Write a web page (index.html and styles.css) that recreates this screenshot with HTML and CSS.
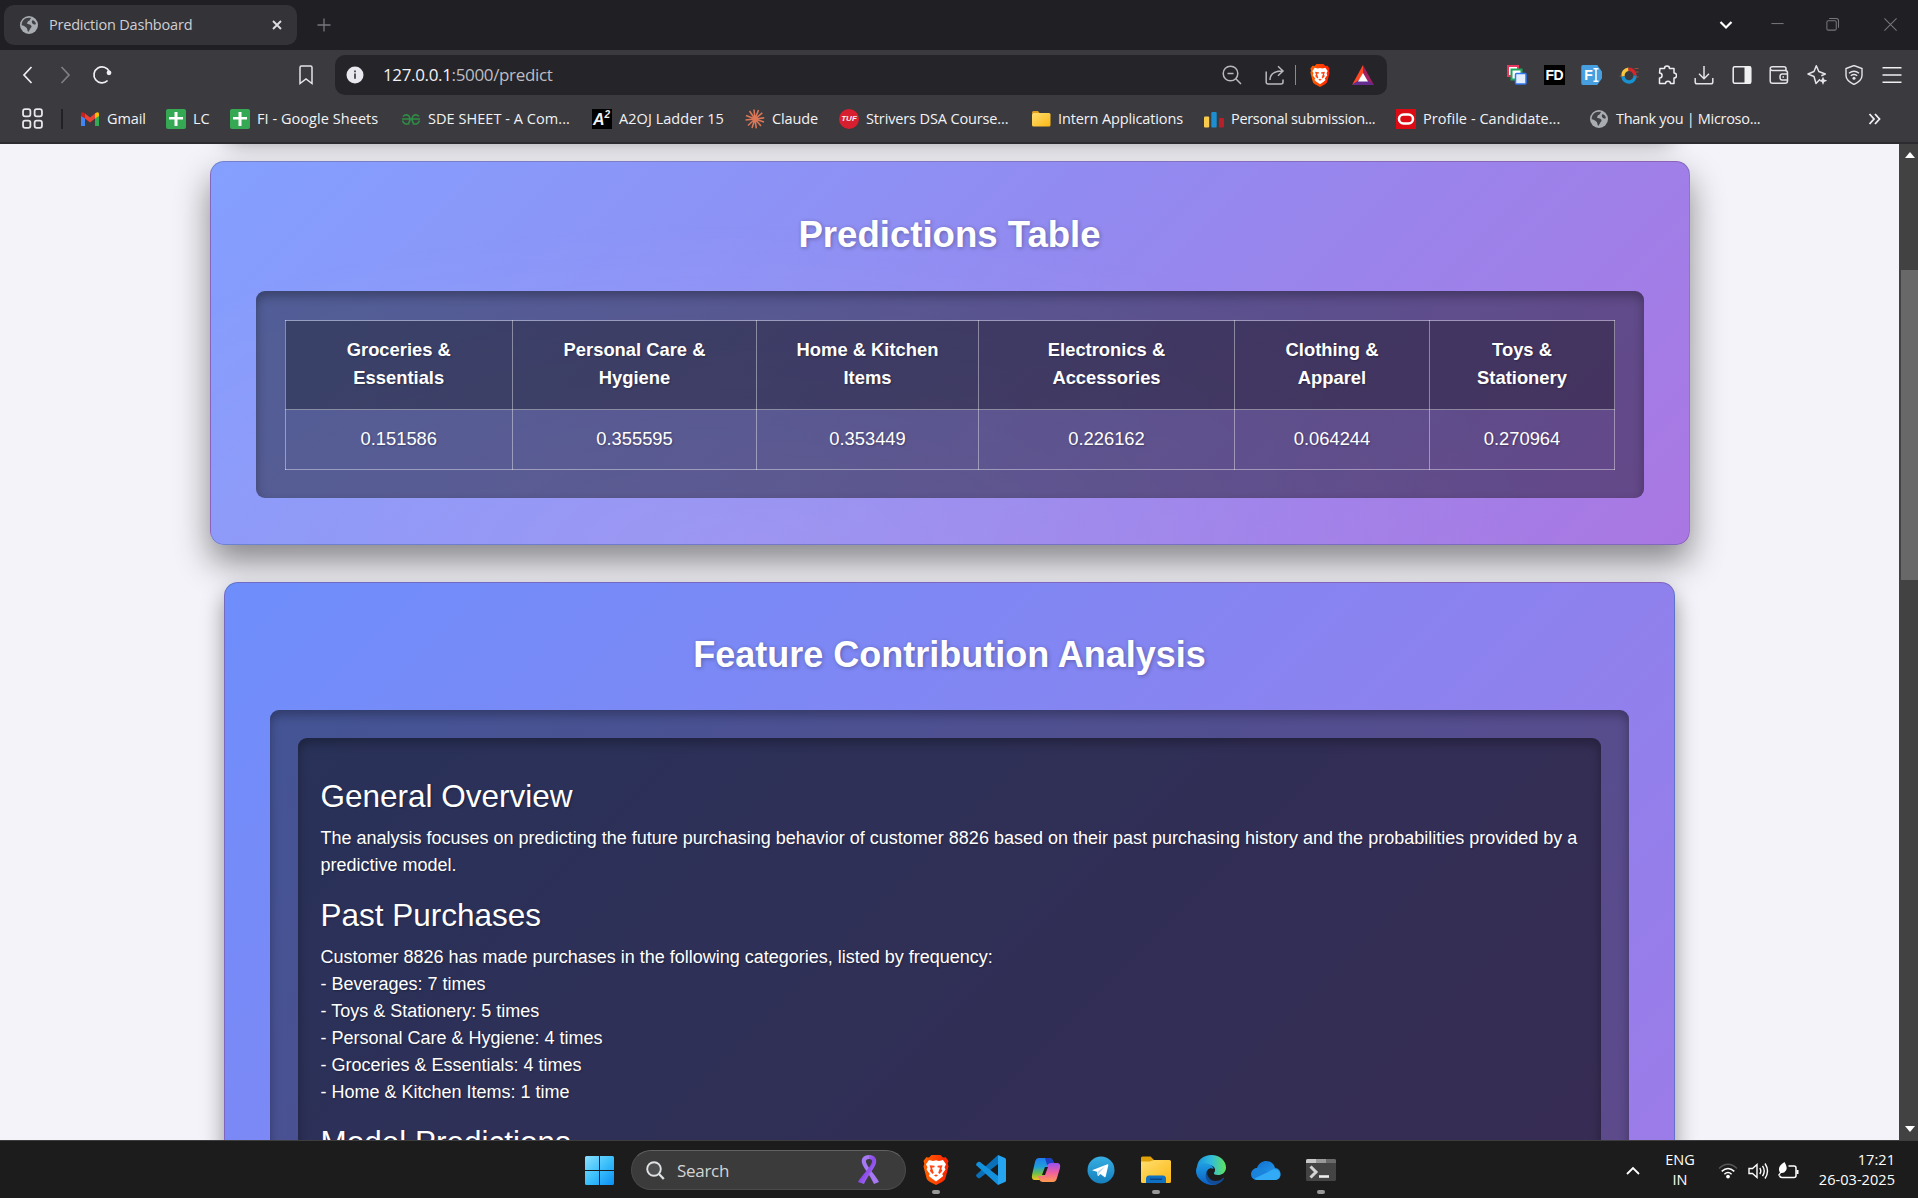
FILE: index.html
```html
<!DOCTYPE html>
<html lang="en">
<head>
<meta charset="utf-8">
<title>Prediction Dashboard</title>
<link rel="stylesheet" href="styles.css">
</head>
<body>
<svg class="defs" aria-hidden="true">
  <defs>
    <linearGradient id="g-brave" x1="0" x2="1"><stop offset="0" stop-color="#ff6500"/><stop offset="1" stop-color="#ff2000"/></linearGradient>
    <linearGradient id="g-win" x1="0" y1="0" x2="1" y2="1"><stop offset="0" stop-color="#8be0fd"/><stop offset=".5" stop-color="#3cc0fb"/><stop offset="1" stop-color="#0a8ff5"/></linearGradient>
    <linearGradient id="g-folder" x1="0" y1="0" x2="1" y2="1"><stop offset="0" stop-color="#ffdf70"/><stop offset="1" stop-color="#fcb714"/></linearGradient>
    <linearGradient id="g-cloud" x1="0" y1="0" x2="1" y2="1"><stop offset="0" stop-color="#0f6ccb"/><stop offset="1" stop-color="#2ba4f2"/></linearGradient>
    <linearGradient id="g-tg" x1="0" y1="0" x2="0" y2="1"><stop offset="0" stop-color="#37aee2"/><stop offset="1" stop-color="#1580bd"/></linearGradient>
    <linearGradient id="g-edge" x1="0" y1="0" x2="1" y2="0"><stop offset="0" stop-color="#1b94dc"/><stop offset=".5" stop-color="#33bddb"/><stop offset="1" stop-color="#60e35a"/></linearGradient>
    <linearGradient id="g-edge2" x1="0" y1="0" x2="0" y2="1"><stop offset="0" stop-color="#1f9de2"/><stop offset="1" stop-color="#0a5fc4"/></linearGradient>
    <linearGradient id="g-cop1" x1="0" y1="0" x2="0" y2="1"><stop offset="0" stop-color="#1f7cf0"/><stop offset=".4" stop-color="#1f9fd8"/><stop offset=".7" stop-color="#6fbf4a"/><stop offset="1" stop-color="#f5c518"/></linearGradient>
    <linearGradient id="g-cop2" x1="0" y1="0" x2="0" y2="1"><stop offset="0" stop-color="#9a50f0"/><stop offset=".5" stop-color="#ee5fa0"/><stop offset="1" stop-color="#ff9a50"/></linearGradient>
    <linearGradient id="g-rib" x1="0" y1="0" x2="1" y2="1"><stop offset="0" stop-color="#b98bf8"/><stop offset=".5" stop-color="#8b4be8"/><stop offset="1" stop-color="#b48af8"/></linearGradient>
    <symbol id="globe" viewBox="0 0 18 18"><circle cx="9" cy="9" r="9" fill="#a9adb2"/><path d="M5.200 2.600C7 1.600 9.600 1.300 11.200 2.100C10 3.100 10.300 4.200 9.200 4.800C7.600 5 7.700 6.400 7 7.400C7.800 8.200 9.800 8 10.600 8.900C12 9.900 11.800 11 10.700 12C9.900 13 9.700 14.500 8.200 15.900C7.200 15 7.700 13.200 6.700 12.100C5.500 10.900 3.600 9.400 1.600 9.300C1.600 6.500 3 4 5.200 2.600zM12.400 4.200C14 4.200 15.400 5.400 15.900 7.700C15.200 9.200 13.500 8.400 12.500 7.400C11.500 6.300 11.600 5 12.400 4.200z" fill="#3f4145"/></symbol>
    <symbol id="sheet" viewBox="0 0 20 20"><rect width="20" height="20" rx="2" fill="#34a853"/><path d="M8.500 3h3v5H17v2.500h-5.500V17h-3v-6.500H3V8h5.500z" fill="#fff"/></symbol>
    <symbol id="brave" viewBox="0 0 26 30"><path d="M13 0h4.500l2.500 2.600 2.800-.3L25.500 6l-.8 2.800.8 2.600-3 11.500c-.5 1.800-1.300 2.500-3.500 4L13 30l-6-3.100c-2.200-1.500-3-2.200-3.500-4L.5 11.400l.8-2.600L.5 6l2.700-3.700 2.800.3L8.500 0z" fill="url(#g-brave)"/><path d="M13 5.200l3 .7 4-.9 3 4.200-1.500 3 1 2.400-3.300 4.300 1 2-2.500 2.100L13 26.500 8.300 23l-2.500-2.100 1-2-3.300-4.300 1-2.400-1.500-3L6 5l4 .9z" fill="#fff"/><path d="M6.500 10.200l5 .6v1.500l-2.500.4 1.800 5-1.300 1.200-2.800-3.200 1-1.800zM19.500 10.200l-5 .6v1.500l2.500.4-1.800 5 1.300 1.200 2.800-3.200-1-1.800zM10.800 20.200l2.200-.8 2.200.8-2.200 1.500z" fill="#ff4715"/></symbol>
  </defs>
</svg>

<header class="tabs">
  <div class="tab">
    <svg class="i18"><use href="#globe"/></svg>
    <span class="tab-title">Prediction Dashboard</span>
    <svg class="x" viewBox="0 0 10 10"><path d="M1 1l8 8M9 1L1 9" stroke="#dedee1" stroke-width="1.900"/></svg>
  </div>
  <svg class="plus" viewBox="0 0 14 14"><path d="M7 .5v13M.5 7h13" stroke="#77777c" stroke-width="1.300"/></svg>
  <div class="winctl">
    <svg viewBox="0 0 16 16"><path d="M2.500 5l5.500 5.500L13.500 5" fill="none" stroke="#fff" stroke-width="2.200"/></svg>
    <svg viewBox="0 0 16 16"><path d="M1.500 7h13" stroke="#77777a" stroke-width="1.100"/></svg>
    <svg viewBox="0 0 16 16"><g fill="none" stroke="#77777a" stroke-width="1.100"><rect x="2" y="4" width="10" height="10" rx="1.500"/><path d="M4.500 1.600H12q2.400 0 2.400 2.400v7.500"/></g></svg>
    <svg viewBox="0 0 16 16"><path d="M1.500 1.500l13 13M14.500 1.500l-13 13" stroke="#77777a" stroke-width="1.100"/></svg>
  </div>
</header>

<nav class="toolbar">
  <svg class="nav-i back" viewBox="0 0 20 20"><path d="M13.500 2L6 10l7.500 8" fill="none" stroke="#f0f0f2" stroke-width="1.700"/></svg>
  <svg class="nav-i fwd" viewBox="0 0 20 20"><path d="M6.500 2L14 10l-7.500 8" fill="none" stroke="#7f7f84" stroke-width="1.700"/></svg>
  <svg class="nav-i reload" viewBox="0 0 20 20"><path d="M15.600 15.500A8 8 0 1 1 17.300 6.600" fill="none" stroke="#f0f0f2" stroke-width="1.700"/><circle cx="17" cy="7.800" r="2.400" fill="#f0f0f2"/></svg>
  <svg class="nav-i mark" viewBox="0 0 20 20"><path d="M4 2.500q0-1.500 1.500-1.500h9q1.500 0 1.500 1.500V18.500l-6-4.500-6 4.500z" fill="none" stroke="#e4e4e7" stroke-width="1.500"/></svg>
  <div class="url">
    <svg class="i18" viewBox="0 0 18 18"><circle cx="9" cy="9" r="8.500" fill="#e9e8ee"/><path d="M9 7.600v5.200M9 4.400v1.900" stroke="#3b3a3f" stroke-width="1.700"/></svg>
    <span class="addr">127.0.0.1<i>:5000/predict</i></span>
    <svg class="u zoom" viewBox="0 0 20 20"><g fill="none" stroke="#b9b9be" stroke-width="1.500"><circle cx="8.500" cy="8.500" r="7.300"/><path d="M13.800 13.800L19 19M5.500 8.500h6"/></g></svg>
    <svg class="u share" viewBox="0 0 20 20"><g fill="none" stroke="#b9b9be" stroke-width="1.500"><path d="M1.200 6.500V17q0 2 2 2H16q2 0 2-2v-2.500"/><path d="M5 15C5 9 8.500 6 17.500 6M13 1.300L18 6l-5 4.700"/></g></svg>
    <span class="bar"></span>
    <svg class="u brave-s"><use href="#brave"/></svg>
    <svg class="u bat" viewBox="0 0 22 20"><path d="M11 0L0 20l11-7z" fill="#ff4724"/><path d="M11 0l11 20-11-7z" fill="#9e1f63"/><path d="M0 20h22l-11-8z" fill="#662d91"/><path d="M11 8l5 8.500H6z" fill="#fff"/></svg>
  </div>
  <div class="exts">
    <svg viewBox="0 0 20 20"><rect x="1" y="1" width="10" height="10" fill="#fff" stroke="#e8365d" stroke-width="2"/><rect x="4.500" y="4.500" width="10" height="10" fill="#fff" stroke="#1fa65a" stroke-width="2"/><rect x="8.500" y="8.500" width="10.500" height="10.500" rx="1" fill="#e4effe" stroke="#3277f1" stroke-width="1.500"/></svg>
    <span class="fd">FD</span>
    <span class="fi">F<svg viewBox="0 0 6 14"><path d="M.5.8h5M.5 13.200h5M3 1v12" stroke="#fff" stroke-width="1.500"/></svg></span>
    <svg viewBox="0 0 20 20"><g fill="none" stroke-width="3.400"><path d="M4 11.500A6.200 6.200 0 0 1 9.500 4.200" stroke="#f9c73f"/><path d="M9.500 4.200A6.200 6.200 0 0 1 16 10.500" stroke="#d5262c"/><path d="M16 10.500A6 6 0 0 1 4 11.500" stroke="#1991cf"/></g><path d="M15.500 3.500h4M17 7h2.500M.5 11h2M16.500 12h3" stroke="#965138"/></svg>
    <svg viewBox="0 0 20 20"><path d="M3 3.500h4.500C7.500.3 12.500.3 12.500 3.500H17v4.500c3.400 0 3.400 5 0 5V18.500h-3.500c0-3-5-3-5 0H2.500V13c3.400 0 3.400-5 0-5z" fill="none" stroke="#ededf0" stroke-width="1.500" stroke-linejoin="round"/></svg>
    <svg viewBox="0 0 20 20"><path d="M10 1v12.500M5 8.700l5 5 5-5M1.200 13v4q0 1.800 1.800 1.800h14q1.800 0 1.800-1.800v-4" fill="none" stroke="#e4e4e7" stroke-width="1.500"/></svg>
    <svg viewBox="0 0 20 20"><rect x="1.200" y="1.700" width="17.600" height="16.600" rx="1.500" fill="none" stroke="#f0f0f2" stroke-width="1.500"/><path d="M12.500 1.500h6.300v17h-6.300z" fill="#f0f0f2"/></svg>
    <svg viewBox="0 0 20 20"><path d="M1.200 4.500V16q0 2.300 2.300 2.300H16q2.500 0 2.500-2.300V7.800Q18.500 5.500 16 5.500H3Q1.200 5.200 1.200 3.500T3.500 1.700H15q2 0 2 2v1.500M18.500 9H13q-2 0-2 3t2 3h5.500M13.500 12h1.500" fill="none" stroke="#e4e4e7" stroke-width="1.500"/></svg>
    <svg viewBox="0 0 20 20"><path d="M13 14.300L9 18.500 7 11.500 1 9l6-2.500L9.300.8l2.500 5.700 6.500 2.500-4 1.700" fill="none" stroke="#e4e4e7" stroke-width="1.500" stroke-linejoin="round"/><path d="M16 11.500l1.200 3 3 1.200-3 1.200-1.200 3-1.200-3-3-1.200 3-1.200z" fill="#e4e4e7"/></svg>
    <svg viewBox="0 0 20 20"><g fill="none" stroke="#e4e4e7" stroke-width="1.400"><path d="M10 .5l8 3v7q0 5-8 9-8-4-8-9v-7z"/><path d="M5 8.200q5-4 10 0M6.800 10.700q3.200-2.300 6.400 0"/></g><circle cx="10" cy="13.300" r="1.500" fill="#e4e4e7"/></svg>
    <svg viewBox="0 0 20 20"><path d="M.5 2.800h19M.5 10h19M.5 17.200h19" stroke="#f0f0f2" stroke-width="1.500"/></svg>
  </div>
</nav>

<nav class="bookmarks">
  <svg class="b apps-i" viewBox="0 0 20 20"><g fill="none" stroke="#e8e8eb" stroke-width="1.700"><rect x="1" y="1" width="7" height="7" rx="2"/><rect x="12" y="1" width="7" height="7" rx="2"/><rect x="1" y="12" width="7" height="7" rx="2"/><rect x="12" y="12" width="7" height="7" rx="2"/></g></svg>
  <span class="divider"></span>
  <a><svg class="b" viewBox="0 0 20 20"><path d="M1 5v12h4V8.500z" fill="#4285f4"/><path d="M19 5v12h-4V8.500z" fill="#34a853"/><path d="M5 4.500l5 4 5-4v5l-5 4-5-4z" fill="#ea4335"/><path d="M1 7V4.700Q1.500 2.500 4 3.700l1 .8v5z" fill="#c5221f"/><path d="M19 7V4.700Q18.500 2.500 16 3.700l-1 .8v5z" fill="#fbbc04"/></svg><span>Gmail</span></a>
  <a><svg class="b"><use href="#sheet"/></svg><span>LC</span></a>
  <a class="wide"><svg class="b"><use href="#sheet"/></svg><span>FI - Google Sheets</span></a>
  <a class="wide"><svg class="b" viewBox="0 0 20 20"><path d="M1 10h18M8.500 14.500Q3 16.500 1.500 11.500M2 7.500Q5 4.500 8 7q2 4-.5 7.200M11.500 14.500q5.500 2 7-3M18 7.500Q15 4.500 12 7q-2 4 .5 7.200" fill="none" stroke="#2f8d46" stroke-width="1.600"/></svg><span>SDE SHEET - A Com...</span></a>
  <a class="wide"><span class="a2">A<sup>2</sup></span><span>A2OJ Ladder 15</span></a>
  <a><svg class="b" viewBox="0 0 20 20"><path d="M10 10L9 .5M10 10l3.500-9M10 10l7.300-6.200M10 10l9.300-1.200M10 10l9 3M10 10l6 7M10 10l1.300 9.300M10 10l-3 9M10 10l-7 6.500M10 10l-9.500 1M10 10L1 6.500M10 10L4.500 2" stroke="#d97757" stroke-width="1.600"/></svg><span>Claude</span></a>
  <a><span class="tuf">TUF</span><span>Strivers DSA Course...</span></a>
  <a><svg class="b" viewBox="0 0 20 20"><path d="M1 3.500Q1 2 2.500 2H7l2 2.500H1z" fill="#e0a01c"/><rect x="1" y="4" width="18.500" height="13.500" rx="1.500" fill="url(#g-folder)"/></svg><span>Intern Applications</span></a>
  <a class="tight"><svg class="b" viewBox="0 0 20 20"><rect x="0" y="7.500" width="5.200" height="11" rx="1" fill="#f8cb4c"/><rect x="7.300" y="3" width="5.400" height="15.500" rx="1" fill="#1d8fd0"/><rect x="15" y="9" width="5" height="9.500" rx="1" fill="#b5202a"/></svg><span>Personal submission...</span></a>
  <a class="wide"><svg class="b" viewBox="0 0 20 20"><rect width="20" height="20" fill="#dc0a14"/><rect x="3" y="5.500" width="14" height="9" rx="4.500" fill="none" stroke="#fff" stroke-width="2.500"/></svg><span>Profile - Candidate...</span></a>
  <a class="tight"><svg class="b i18"><use href="#globe"/></svg><span>Thank you | Microso...</span></a>
  <svg class="more" viewBox="0 0 13 12"><path d="M1.500 1l4.500 5-4.500 5M7 1l4.500 5L7 11" fill="none" stroke="#f0f0f2" stroke-width="1.800"/></svg>
</nav>

<div class="viewport">
  <main class="page">
    <section class="card card-top"></section>
    <section class="card card-table">
      <h2>Predictions Table</h2>
      <div class="panel">
        <table>
          <colgroup><col class="c1"><col class="c2"><col class="c3"><col class="c4"><col class="c5"><col class="c6"></colgroup>
          <thead><tr><th>Groceries &amp;<br>Essentials</th><th>Personal Care &amp;<br>Hygiene</th><th>Home &amp; Kitchen<br>Items</th><th>Electronics &amp;<br>Accessories</th><th>Clothing &amp;<br>Apparel</th><th>Toys &amp;<br>Stationery</th></tr></thead>
          <tbody><tr><td>0.151586</td><td>0.355595</td><td>0.353449</td><td>0.226162</td><td>0.064244</td><td>0.270964</td></tr></tbody>
        </table>
      </div>
    </section>
    <section class="card card-analysis">
      <h2>Feature Contribution Analysis</h2>
      <div class="panel">
        <article>
          <h3>General Overview</h3>
          <p>The analysis focuses on predicting the future purchasing behavior of customer 8826 based on their past purchasing history and the probabilities provided by a predictive model.</p>
          <h3>Past Purchases</h3>
          <p>Customer 8826 has made purchases in the following categories, listed by frequency:<br>- Beverages: 7 times<br>- Toys &amp; Stationery: 5 times<br>- Personal Care &amp; Hygiene: 4 times<br>- Groceries &amp; Essentials: 4 times<br>- Home &amp; Kitchen Items: 1 time</p>
          <h3>Model Predictions</h3>
        </article>
      </div>
    </section>
  </main>
  <div class="scroll">
    <svg viewBox="0 0 10 6"><path d="M5 0l5 6H0z" fill="#fff"/></svg>
    <span class="thumb"></span>
    <svg class="down" viewBox="0 0 10 6"><path d="M0 0h10L5 6z" fill="#fff"/></svg>
  </div>
</div>

<footer class="taskbar">
  <svg class="win" viewBox="0 0 29 29"><path d="M0 1.500Q0 0 1.500 0H14v14H0zM15 0h12.500Q29 0 29 1.500V14H15zM0 15h14v14H1.500Q0 29 0 27.500zM15 15h14v12.500q0 1.500-1.500 1.500H15z" fill="url(#g-win)"/></svg>
  <div class="search">
    <svg class="lens" viewBox="0 0 19 19"><circle cx="8" cy="8" r="6.800" fill="#4d4f50" stroke="#dfe3e5" stroke-width="1.900"/><path d="M13 13l4.800 5" stroke="#dfe3e5" stroke-width="2.300"/></svg>
    <span>Search</span>
    <svg class="ribbon" viewBox="0 0 22 30"><path d="M11 0C5 0 3 4 4 8c1.200 5 7 10 12 21l5-2C17.500 20 9.500 12.500 8 7c-.5-2 1-3 3-3z" fill="#a678f2"/><path d="M11 0c6 0 8 4 7 8-1.200 5-8 12-12 21l-6-2C4 20 12.500 12.500 14 7c.5-2-1-3-3-3z" fill="url(#g-rib)"/></svg>
  </div>
  <div class="apps">
    <div class="app on"><svg class="lion"><use href="#brave"/></svg></div>
    <div class="app"><svg viewBox="0 0 30 30"><path d="M22 0v9L4 23q-1 .7-2 0L.5 21.600q-.8-1 0-2z" fill="#0a70b8"/><path d="M22 30v-9L4 7Q3 6.300 2 7L.5 8.400q-.8 1 0 2z" fill="#1391dc"/><path d="M22 0l7 3q1 .5 1 1.500v21q0 1-1 1.500l-7 3z" fill="#27a4f0"/></svg></div>
    <div class="app"><svg viewBox="0 0 30 30"><path d="M8 3h10q3 0 4 3l2 4h-6l-4 12q-1 3-4 3H4q-4 0-3-5L4 7q1-4 4-4z" fill="url(#g-cop1)"/><path d="M14 3h4q3 0 4 3l1.500 4H16z" fill="#1c3fc4"/><path d="M22 27H12q-3 0-4-3l-1-3h5l4-10q1-3 4-3h6q4 0 3 5l-3 10q-1 4-4 4z" fill="url(#g-cop2)"/><path d="M14 12h3l-3 8h-3z" fill="#1c1c1c"/></svg></div>
    <div class="app"><svg viewBox="0 0 30 30"><circle cx="15" cy="15" r="13.500" fill="url(#g-tg)"/><path d="M6 15.200l15.500-6q1-.3.800 1L19.700 21.500q-.4 1-1.300.4l-4-3-2 2q-.7.400-.8-.6l-.6-3.600z" fill="#fff"/><path d="M11.200 16.800l8-5.300-5.800 6.200-1 3z" fill="#b9d8ea"/></svg></div>
    <div class="app on"><svg viewBox="0 0 30 30"><path d="M0 3q0-1.500 1.500-1.500h8L13 5v5H0z" fill="#e0a208"/><path d="M0 6.500h9L13 5h15.500Q30 5 30 6.500v20q0 1.500-1.500 1.500h-27Q0 28 0 26.500z" fill="url(#g-folder)"/><path d="M5 28v-4q0-3.500 3-3.500h14q3 0 3 3.500v4z" fill="#0f6fc0"/><path d="M9 24.200h12" stroke="#0a3f7c" stroke-width="1.300"/></svg></div>
    <div class="app"><svg viewBox="0 0 30 30"><path d="M1 13C1 5 7.500 0 15.500 0 24 0 30 6 30 12.500c0 5-4 7.500-8 7.500-3 0-4.500-1-4-2 3-4-.5-8-5-8C6 10 1 15 1 13z" fill="url(#g-edge)"/><path d="M0 16C0 10 6 7.500 11 8.500c4 .7 6.500 3.500 6.500 5.500-3-2-7 0-7 5 0 6 6 11 11 10.500-2.500 1-11 1-16-3.500-3.500-3-5.500-6-5.500-10z" fill="url(#g-edge2)"/><path d="M12 14.500C9.500 18 12.500 26 19.500 26c3 0 6-1.300 7.500-3 .6-.5 1.300 0 1 .6C25.500 28 21 30 17.500 29.700 9.500 28.500 7.500 18.500 12 14.500z" fill="#124c96"/></svg></div>
    <div class="app"><svg viewBox="0 0 30 30"><path d="M7 25c-9 0-9-11-1-12C9 3.500 22 4 24 13c7 0 8 12 0 12z" fill="url(#g-cloud)"/><path d="M6 13q3-.5 6 1.500l8 4-13 6.500Q0 25 .5 19 1.500 13.500 6 13z" fill="#1a84dd"/><path d="M3.500 23.500L19 16q4-3 8-.5 4 4 0 8-1.500 1.500-3 1.500H7q-2 0-3.500-1.500z" fill="#32aaf5"/></svg></div>
    <div class="app on"><svg viewBox="0 0 30 30"><rect y="4" width="30" height="22" rx="1.500" fill="#444"/><path d="M0 8V5.500Q0 4 1.500 4H10v4z" fill="#c9c9c9"/><path d="M10 4h10v4H10z" fill="#999"/><path d="M20 4h8.500Q30 4 30 5.500V8H20z" fill="#6a6a6a"/><path d="M4.500 11.500l5.500 5.500-5.500 5.500" fill="none" stroke="#d4d4d4" stroke-width="3"/><path d="M13 21.500h10" stroke="#eee" stroke-width="2.600"/></svg></div>
  </div>
  <svg class="caret" viewBox="0 0 14 9"><path d="M1 8l6-6 6 6" fill="none" stroke="#fff" stroke-width="1.800"/></svg>
  <div class="lang">ENG<br>IN</div>
  <svg class="wifi" viewBox="0 0 20 16"><g fill="none" stroke="#fff" stroke-width="1.500"><path d="M1 5.500q9-8.500 18 0" stroke="#565656"/><path d="M3.700 8.400q6.300-5.800 12.600 0M6.400 11.200q3.600-3.300 7.200 0"/></g><circle cx="10" cy="13.600" r="1.900" fill="#fff"/></svg>
  <svg class="vol" viewBox="0 0 21 18"><g fill="none" stroke="#fff" stroke-width="1.400"><path d="M1 6.500h3.500L9 2.500v13l-4.500-4H1zM11.800 6q2 3 0 6M14.500 3.800q3.500 5.200 0 10.400M17 1.500q5 7.500 0 15"/></g></svg>
  <svg class="batt" viewBox="0 0 21 18"><path d="M10.500 4H16q2 0 2 2v7.500q0 2-2 2H4q-2 0-2.500-2" fill="none" stroke="#fff" stroke-width="1.500"/><path d="M18.500 8h2v4h-2z" fill="#fff"/><path d="M6.500 0Q10 5.500 8 8.500 6 11.500 3 11l-2 3-1-1 2-2.500Q-1.500 5 6.500 0z" fill="#fff"/></svg>
  <div class="clock">17:21<br>26-03-2025</div>
</footer>
</body>
</html>
```

FILE: styles.css
```css
* { box-sizing: border-box; }
body { margin: 0; width: 1918px; height: 1198px; overflow: hidden; display: flex; flex-direction: column; background: #1c1c1c; font-family: "Open Sans", "Noto Sans", sans-serif; color: #fff; }
svg { display: block; flex: none; }
.defs { position: absolute; width: 0; height: 0; }
.i18 { width: 18px; height: 18px; }

/* Tab strip */
.tabs { height: 50px; flex: none; background: #201f24; display: flex; align-items: center; padding-left: 4px; }
.tab { width: 293px; height: 40px; background: #343338; border-radius: 10px; display: flex; align-items: center; padding: 0 15px 0 16px; font-size: 14.500px; color: #cfcfd2; }
.tab-title { margin-left: 11px; flex: 1; letter-spacing: -.2px; white-space: nowrap; padding-bottom: 2px; }
.x { width: 10px; height: 10px; }
.plus { width: 14px; height: 14px; margin-left: 20px; }
.winctl { margin-left: auto; display: grid; grid-template-columns: 52px 55px 58px 35px; }
.winctl svg { width: 16px; height: 16px; }
.winctl svg:nth-child(n+2) { width: 15px; height: 15px; }

/* Address row */
.toolbar { height: 50px; flex: none; background: #3b3a3f; display: flex; align-items: center; padding-left: 18px; }
.nav-i { width: 20px; height: 20px; }
.fwd { margin-left: 17px; }
.reload { margin-left: 17px; }
.mark { margin-left: 184px; width: 20px; height: 20px; }
.url { margin-left: 19px; width: 1052px; height: 40px; background: #252429; border-radius: 10px; display: flex; align-items: center; padding: 0 13px 0 11px; }
.addr { margin-left: 19px; font-size: 17px; letter-spacing: -.35px; color: #f2f2f4; flex: 1; line-height: 24px; }
.addr i { font-style: normal; color: #bdbdc2; }
.u { width: 20px; height: 20px; }
.share { margin-left: 23px; }
.bar { width: 1px; height: 20px; background: #8a898e; margin: 0 14px 0 10px; }
.brave-s { width: 20px; height: 23px; }
.bat { width: 22px; height: 20px; margin-left: 22px; }
.exts { margin-left: 111px; display: grid; grid-template-columns: repeat(11, 37.500px); justify-items: center; align-items: center; }
.exts > svg { width: 20px; height: 20px; }
.fd { width: 21px; height: 20px; background: #000; font: 700 14px/20px "Liberation Sans", sans-serif; text-align: center; letter-spacing: -.5px; }
.fi { width: 21px; height: 20px; background: #479fe0; border-radius: 2px; clip-path: polygon(0 0, 76% 0, 100% 35%, 100% 65%, 76% 100%, 0 100%); display: flex; align-items: center; font: 700 14px/20px "Liberation Sans", sans-serif; padding-left: 3px; }
.fi svg { width: 6px; height: 14px; }

/* Bookmarks bar */
.bookmarks { height: 44px; flex: none; background: #3b3a3f; border-bottom: 2px solid #2c2b30; display: grid; grid-template-columns: 39px 19px 86px 64px 171px 191px 153px 94px 192px 173px 192px 194px 278px auto; align-items: center; padding: 0 0 5px 22px; font-size: 14.500px; color: #f2f2f4; }
.bookmarks a { display: flex; align-items: center; white-space: nowrap; letter-spacing: -.13px; }
.bookmarks a.wide { letter-spacing: .05px; }
.bookmarks a.tight { letter-spacing: -.31px; }
.bookmarks a > span:last-child { margin-left: 7px; }
.bookmarks a > :first-child { flex: none; }
.b { width: 20px; height: 20px; }
.b.apps-i { width: 21px; height: 21px; }
.b.i18 { width: 18px; height: 18px; margin-right: 1px; }
.divider { width: 2px; height: 20px; background: #222126; }
.a2 { width: 20px; height: 20px; background: #000; font: italic 700 16px/22px "Liberation Sans", sans-serif; position: relative; padding-left: 1px; }
.a2 sup { position: absolute; right: 2px; top: 0; font-size: 10px; line-height: 11px; }
.tuf { width: 20px; height: 20px; border-radius: 50%; background: #d81f30; font: italic 700 8px/20px "Liberation Sans", sans-serif; text-align: center; letter-spacing: 0; }
.more { width: 13px; height: 12px; }

/* Page viewport */
.viewport { height: 996px; flex: none; display: flex; overflow: hidden; background: #f4f3f9; }
.page { width: 1899px; display: flex; flex-direction: column; align-items: center; font-family: "Liberation Sans", Arial, sans-serif; font-size: 18px; line-height: 27px; }
.card { flex: none; border: 1px solid rgba(0, 0, 0, .175); border-radius: 14px; background: linear-gradient(135deg, #6e8efb, #a777e3); box-shadow: 0 11px 22px rgba(0, 0, 0, .4); }
.card-top { width: 1451px; height: 60px; margin-top: -73px; }
.card h2 { margin: 0; text-align: center; font-size: 36px; line-height: 44px; font-weight: 700; text-shadow: 1px 1px 4px rgba(0, 0, 0, .3); }
.panel { background: rgba(0, 0, 0, .4); border-radius: 9px; box-shadow: inset 0 5px 11px rgba(0, 0, 0, .3); }
.card-table { position: relative; z-index: 1; width: 1480px; height: 384px; margin-top: 30px; padding: 51px 45px 0; background: radial-gradient(ellipse at 35% 100%, rgba(255, 255, 255, .1), transparent 60%), linear-gradient(135deg, #84a0ff, #928af0 50%, #aa77e2); box-shadow: 0 17px 34px rgba(0, 0, 0, .45); }
.card-table h2 { font-size: 36.600px; }
.card-table .panel { margin-top: 34px; height: 207px; padding: 29px; }
table { width: 1330px; height: 150px; table-layout: fixed; border-collapse: collapse; font-size: 18.360px; line-height: 28px; text-align: center; text-shadow: 1px 1px 2px rgba(0, 0, 0, .3); }
th, td { border: 1px solid rgba(255, 255, 255, .4); padding: 0 0 2px; }
th { background: rgba(0, 0, 0, .3); height: 89px; }
.c1 { width: 227.500px; } .c2 { width: 244px; } .c3 { width: 222px; } .c4 { width: 256px; } .c5 { width: 195px; } .c6 { width: 185px; }
.card-analysis { position: relative; z-index: 2; width: 1451px; height: 1050px; margin-top: 37px; padding: 50px 45px 0; }
.card-analysis .panel { margin-top: 33px; height: 880px; padding: 28px; }
article { height: 830px; padding: 39px 22px 0 22.500px; background: rgba(0, 0, 0, .4); border-radius: 9px; box-shadow: inset 0 5px 11px rgba(0, 0, 0, .3); text-shadow: 1px 1px 2px rgba(0, 0, 0, .3); }
h3 { margin: 0 0 10px; font-size: 31.500px; line-height: 38px; font-weight: 400; }
p { margin: 0 0 17px; }
.scroll { width: 19px; background: #424242; padding: 8px 0 0 2px; display: flex; flex-direction: column; align-items: center; position: relative; z-index: 3; }
.scroll svg { width: 10px; height: 6px; }
.thumb { width: 17px; height: 310px; background: #686868; margin-top: 112px; }
.scroll .down { margin-top: auto; margin-bottom: 8px; }

/* Taskbar */
.taskbar { height: 58px; flex: none; background: #1c1c1c; border-top: 1px solid #3d3d3d; display: flex; align-items: center; padding: 2px 23px 0 585px; }
.win { width: 29px; height: 29px; }
.search { width: 275px; height: 40px; margin-left: 17px; border-radius: 20px; background: #3b3b3b; border: 1px solid #4a4a4a; border-top-color: #626262; display: flex; align-items: center; padding-left: 14px; font-size: 17px; color: #d4d4d4; margin-top: -1px; }
.search span { margin-left: 12px; width: 181px; letter-spacing: -.3px; }
.lens { width: 19px; height: 19px; }
.ribbon { width: 22px; height: 30px; }
.apps { display: flex; margin-left: 2px; margin-top: -2px; }
.app { width: 55px; height: 54px; display: flex; justify-content: center; align-items: center; position: relative; }
.app svg { width: 30px; height: 30px; }
.app svg.lion { width: 26px; }
.app.on::after { content: ""; position: absolute; bottom: 3px; width: 8px; height: 4px; border-radius: 2px; background: #999; }
.caret { width: 14px; height: 9px; margin-left: 278px; }
.lang { width: 50px; margin-left: 15px; text-align: center; font-size: 14.500px; line-height: 20px; letter-spacing: 0; margin-top: -2px; }
.wifi { width: 20px; height: 16px; margin-left: 13px; }
.vol { width: 21px; height: 18px; margin-left: 10px; }
.batt { width: 21px; height: 18px; margin-left: 9px; }
.clock { margin-left: auto; text-align: right; font-size: 14.500px; line-height: 20px; letter-spacing: .05px; margin-top: -2px; }
```
